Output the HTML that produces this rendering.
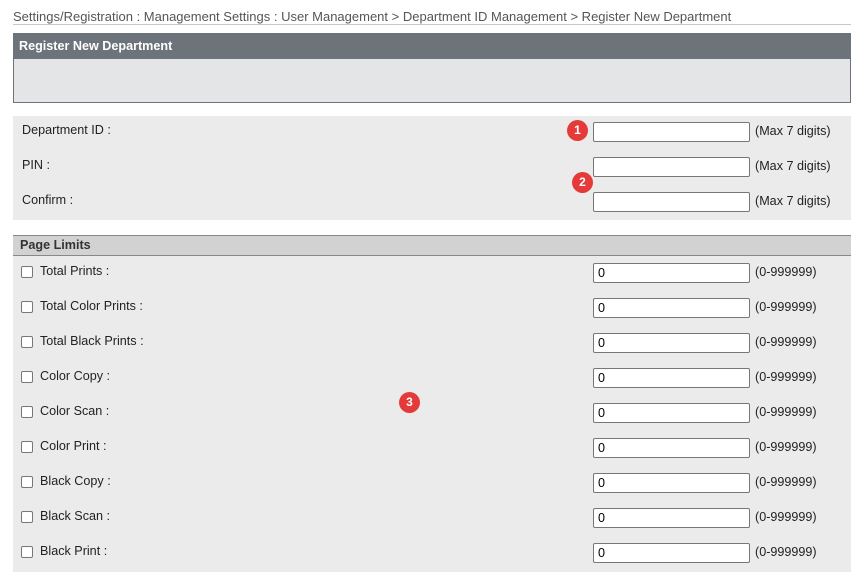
<!DOCTYPE html>
<html><head><style>
body{margin:0;width:851px;height:579px;background:#fff;font-family:"Liberation Sans",Arial,sans-serif;font-size:12.6px;color:#222;position:relative;overflow:hidden}
.a{position:absolute}
.bc{left:13px;top:9px;color:#555;font-size:13px;white-space:nowrap}
.bl{left:13px;top:24px;width:838px;height:1px;background:#c8c8c8}
.hd{left:13px;top:33px;width:836px;height:68px;border:1px solid #6d737b;background:#e3e5e7}
.hb{left:0;top:0;width:836px;height:25px;background:#6d737b;color:#fff;font-weight:bold;font-size:12.6px;line-height:24px;padding-left:5px;box-sizing:border-box}
.s1{left:13px;top:116px;width:838px;height:104px;background:#ebebeb}
.pl{left:13px;top:235px;width:838px;height:19px;background:#d2d2d2;border-top:1px solid #888;border-bottom:1px solid #888;font-weight:bold;color:#333;line-height:19px;padding-left:7px;box-sizing:content-box;font-size:12.6px}
.s2{left:13px;top:256px;width:838px;height:316px;background:#ebebeb}
.in{width:157px;height:20px;border:1px solid #777;border-radius:2px;background:#fff;box-sizing:border-box;left:593px;font-size:12.6px;line-height:18px;padding-left:4px;color:#000}
.t{left:755px;color:#222}
.cb{left:21px;width:12px;height:12px;border:1px solid #777;border-radius:2px;background:#fff;box-sizing:border-box}
.dot{width:21px;height:21px;border-radius:50%;background:#e53a3a;color:#fff;font-weight:bold;font-size:12px;text-align:center;line-height:21px}
</style></head><body>
<div class="a bc">Settings/Registration : Management Settings : User Management &gt; Department ID Management &gt; Register New Department</div>
<div class="a bl"></div>
<div class="a hd"><div class="a hb">Register New Department</div></div>
<div class="a s1"></div>
<div class="a" style="left:22px;top:123px">Department ID :</div>
<div class="a" style="left:22px;top:158px">PIN :</div>
<div class="a" style="left:22px;top:193px">Confirm :</div>
<div class="a in" style="top:122px"></div><div class="a t" style="top:124px">(Max 7 digits)</div>
<div class="a in" style="top:157px"></div><div class="a t" style="top:159px">(Max 7 digits)</div>
<div class="a in" style="top:192px"></div><div class="a t" style="top:194px">(Max 7 digits)</div>
<div class="a dot" style="left:567px;top:120px">1</div>
<div class="a dot" style="left:572px;top:172px">2</div>
<div class="a pl">Page Limits</div>
<div class="a s2"></div>
<div class="a dot" style="left:399px;top:392px">3</div>
<div class="a cb" style="top:266px"></div><div class="a" style="left:40px;top:264px">Total Prints :</div><div class="a in" style="top:263px">0</div><div class="a t" style="top:265px">(0-999999)</div>
<div class="a cb" style="top:301px"></div><div class="a" style="left:40px;top:299px">Total Color Prints :</div><div class="a in" style="top:298px">0</div><div class="a t" style="top:300px">(0-999999)</div>
<div class="a cb" style="top:336px"></div><div class="a" style="left:40px;top:334px">Total Black Prints :</div><div class="a in" style="top:333px">0</div><div class="a t" style="top:335px">(0-999999)</div>
<div class="a cb" style="top:371px"></div><div class="a" style="left:40px;top:369px">Color Copy :</div><div class="a in" style="top:368px">0</div><div class="a t" style="top:370px">(0-999999)</div>
<div class="a cb" style="top:406px"></div><div class="a" style="left:40px;top:404px">Color Scan :</div><div class="a in" style="top:403px">0</div><div class="a t" style="top:405px">(0-999999)</div>
<div class="a cb" style="top:441px"></div><div class="a" style="left:40px;top:439px">Color Print :</div><div class="a in" style="top:438px">0</div><div class="a t" style="top:440px">(0-999999)</div>
<div class="a cb" style="top:476px"></div><div class="a" style="left:40px;top:474px">Black Copy :</div><div class="a in" style="top:473px">0</div><div class="a t" style="top:475px">(0-999999)</div>
<div class="a cb" style="top:511px"></div><div class="a" style="left:40px;top:509px">Black Scan :</div><div class="a in" style="top:508px">0</div><div class="a t" style="top:510px">(0-999999)</div>
<div class="a cb" style="top:546px"></div><div class="a" style="left:40px;top:544px">Black Print :</div><div class="a in" style="top:543px">0</div><div class="a t" style="top:545px">(0-999999)</div>
</body></html>
